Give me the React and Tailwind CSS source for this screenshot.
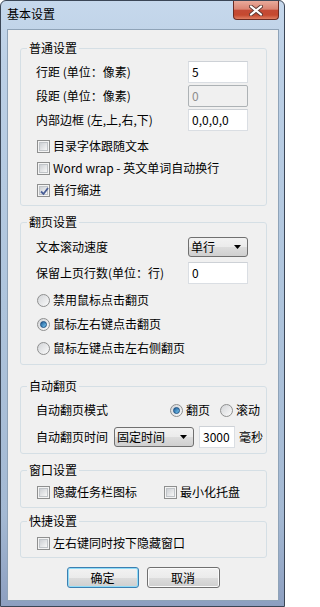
const btnBg =
  "bg-[linear-gradient(#f2f2f2_0%,#ebebeb_50%,#dddddd_50%,#cfcfcf_100%)]";

function Group({ title, className, children }) {
  return (
    <div className={`relative ml-[12px] mr-[11px] rounded-[3px] border border-[#d5dfe5] ${className}`}>
      <span className="absolute -top-[8px] left-[6px] bg-[#f0f0f0] px-[2px] leading-[14px]">{title}</span>
      {children}
    </div>
  );
}

function TextBox({ value, disabled }) {
  if (disabled) {
    return (
      <div className="flex h-[22px] w-[60px] items-center rounded-[2px] border border-[#adb2b5] bg-[#f0f0f0] px-[3px] text-[#8d8d8d]">
        {value}
      </div>
    );
  }
  return (
    <div className="flex h-[22px] w-[60px] items-center border border-[#dadee3] border-t-[#cdd1d6] bg-white px-[3px]">
      {value}
    </div>
  );
}

function Combo({ value, w }) {
  return (
    <div className={`flex h-[20px] ${w} items-center justify-between rounded-[3px] border border-[#707070] ${btnBg} pl-[2px] pr-[6px]`}>
      <span className="leading-[14px]">{value}</span>
      <svg width="7" height="4" viewBox="0 0 7 4">
        <path d="M0 0 H7 L3.5 4 Z" fill="#000" />
      </svg>
    </div>
  );
}

function Check({ checked, label }) {
  return (
    <div className="flex items-center gap-[3px]">
      <div className="flex h-[13px] w-[13px] items-center justify-center border border-[#8e8f8f] bg-[#f4f4f4] p-[1px]">
        <div className="relative h-full w-full border border-[#c0c4c8] bg-gradient-to-br from-[#cdd0d4] to-[#f7f7f7]">
          {checked && (
            <svg className="absolute -left-[1px] -top-[1px]" width="11" height="11" viewBox="0 0 11 11">
              <path d="M2 5.5 L4.5 8 L9 2" fill="none" stroke="#4a5f97" strokeWidth="1.8" />
            </svg>
          )}
        </div>
      </div>
      <span className="leading-[14px]">{label}</span>
    </div>
  );
}

function Radio({ checked, label }) {
  return (
    <div className="flex items-center gap-[3px]">
      <div className="flex h-[13px] w-[13px] items-center justify-center rounded-full border border-[#8e8f8f] bg-gradient-to-br from-[#d2d4d7] to-[#fbfbfb]">
        {checked && (
          <div className="h-[7px] w-[7px] rounded-full border border-[#1b4f82] bg-gradient-to-br from-[#1d5a95] to-[#7ccdf6]" />
        )}
      </div>
      <span className="leading-[14px]">{label}</span>
    </div>
  );
}

export default function App() {
  return (
    <div className="flex h-[607px] w-[285px] flex-col overflow-hidden rounded-t-[6px] border border-[#3b4656] bg-[linear-gradient(#c6d8ec_0%,#bcd0e6_10%,#aec4dc_50%,#a4b9d3_85%,#8d9fc0_100%)] text-[12px] text-black font-['Noto_Sans_CJK_SC','Noto_Sans',sans-serif]">
      <div className="flex h-[28px] shrink-0 items-start justify-between pl-[6px] pr-[5px]">
        <span className="mt-[6px] leading-[14px]">基本设置</span>
        <div className="flex h-[19px] w-[46px] items-center justify-center rounded-b-[4px] border border-t-0 border-[#6b2b22] bg-[linear-gradient(#e9aa9b_0%,#da8573_45%,#c44a35_52%,#c5492f_78%,#df7f63_100%)]">
          <svg width="14" height="11" viewBox="0 0 14 11">
            <path d="M2 1.5 L12 9.5 M12 1.5 L2 9.5" stroke="#5d3a34" strokeWidth="4" strokeLinecap="round" />
            <path d="M2 1.5 L12 9.5 M12 1.5 L2 9.5" stroke="#fff" strokeWidth="2.2" strokeLinecap="round" />
          </svg>
        </div>
      </div>
      <div className="mb-[5px] ml-[6px] mr-[5px] flex flex-1 flex-col border border-[#8fa3b8] bg-[#f0f0f0]">
        <Group title="普通设置" className="mt-[18px] pb-[4px] pl-[15px] pr-[18px] pt-[11px]">
          <div className="flex h-[24px] items-center justify-between">
            <span>行距 (单位：像素)</span>
            <TextBox value="5" />
          </div>
          <div className="flex h-[24px] items-center justify-between">
            <span>段距 (单位：像素)</span>
            <TextBox value="0" disabled />
          </div>
          <div className="flex h-[24px] items-center justify-between">
            <span>内部边框 (左,上,右,下)</span>
            <TextBox value="0,0,0,0" />
          </div>
          <div className="mt-[3px] flex flex-col pl-[1px]">
            <div className="flex h-[22px] items-center"><Check label="目录字体跟随文本" /></div>
            <div className="flex h-[22px] items-center"><Check label="Word wrap - 英文单词自动换行" /></div>
            <div className="flex h-[22px] items-center"><Check checked label="首行缩进" /></div>
          </div>
        </Group>

        <Group title="翻页设置" className="mt-[16px] pb-[4px] pl-[15px] pr-[18px] pt-[12px]">
          <div className="flex h-[24px] items-center justify-between">
            <span>文本滚动速度</span>
            <Combo value="单行" w="w-[60px]" />
          </div>
          <div className="mt-[2px] flex h-[24px] items-center justify-between">
            <span>保留上页行数(单位：行)</span>
            <TextBox value="0" />
          </div>
          <div className="mt-[3px] flex flex-col pl-[1px]">
            <div className="flex h-[24px] items-center"><Radio label="禁用鼠标点击翻页" /></div>
            <div className="flex h-[24px] items-center"><Radio checked label="鼠标左右键点击翻页" /></div>
            <div className="flex h-[24px] items-center"><Radio label="鼠标左键点击左右侧翻页" /></div>
          </div>
        </Group>

        <Group title="自动翻页" className="mt-[21px] pb-[4px] pl-[15px] pt-[11px]">
          <div className="flex h-[24px] items-center">
            <span className="w-[134px]">自动翻页模式</span>
            <Radio checked label="翻页" />
            <div className="ml-[10px]"><Radio label="滚动" /></div>
          </div>
          <div className="mt-[3px] flex h-[24px] items-center">
            <span className="w-[78px]">自动翻页时间</span>
            <Combo value="固定时间" w="w-[80px]" />
            <div className="ml-[5px] flex h-[22px] w-[36px] items-center border border-[#dadee3] border-t-[#cdd1d6] bg-white px-[3px]">3000</div>
            <span className="ml-[4px]">毫秒</span>
          </div>
        </Group>

        <Group title="窗口设置" className="mt-[16px] pb-[4px] pl-[16px] pt-[10px]">
          <div className="flex h-[22px] items-center">
            <div className="w-[127px]"><Check label="隐藏任务栏图标" /></div>
            <Check label="最小化托盘" />
          </div>
        </Group>

        <Group title="快捷设置" className="mt-[13px] pb-[3px] pl-[16px] pt-[10px]">
          <div className="flex h-[22px] items-center">
            <Check label="左右键同时按下隐藏窗口" />
          </div>
        </Group>

        <div className="mt-[9px] flex justify-center gap-[8px]">
          <div className={`flex h-[21px] w-[72px] items-center justify-center rounded-[3px] border border-[#3c7fb1] ${btnBg} shadow-[inset_0_0_0_1px_#8fdcf8]`}>
            确定
          </div>
          <div className={`flex h-[21px] w-[73px] items-center justify-center rounded-[3px] border border-[#707070] ${btnBg} shadow-[inset_0_0_0_1px_#fbfbfb]`}>
            取消
          </div>
        </div>
      </div>
    </div>
  );
}
